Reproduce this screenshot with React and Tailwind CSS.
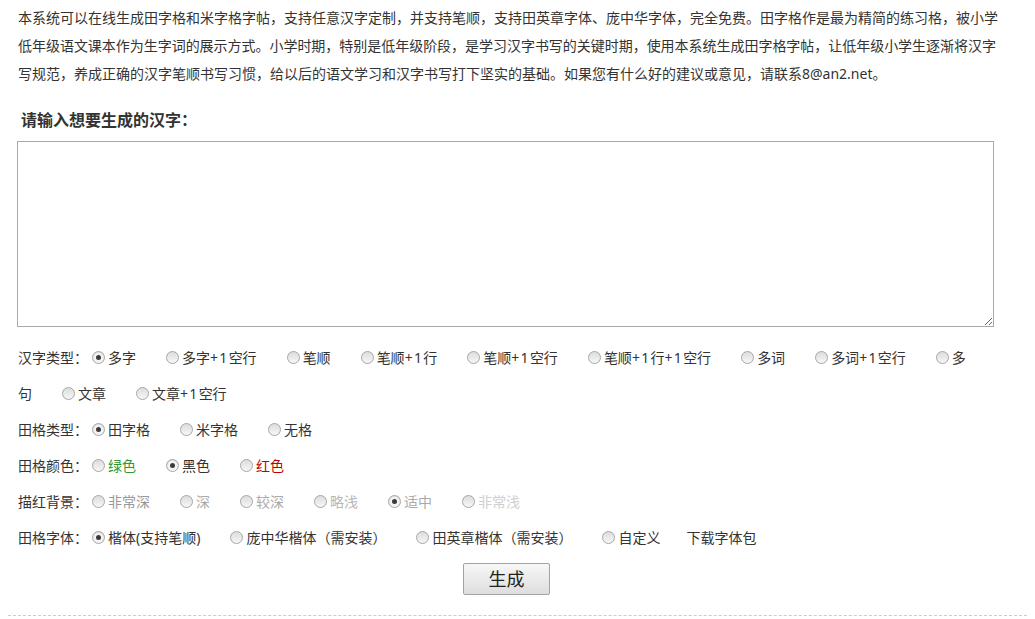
import React from "react";

const FONT = "font-['Noto_Sans','Noto_Sans_CJK_SC',sans-serif]";

function Radio({ checked }) {
  return (
    <span className="ml-[4px] mr-[3px] inline-flex h-[13px] w-[13px] shrink-0 items-center justify-center rounded-full border border-[#a6a6a6] bg-gradient-to-b from-[#dcdcdc] to-[#f7f7f7]">
      {checked && (
        <span className="flex h-[9px] w-[9px] items-center justify-center rounded-full bg-[#f4f4f4]">
          <span className="h-[5px] w-[5px] rounded-full bg-[#3a3a3a]" />
        </span>
      )}
    </span>
  );
}

// "+1" runs are a touch wider in the original font
function Label({ text }) {
  const parts = text.split(/(\+1)/);
  return parts.map((p, i) =>
    p === "+1" ? (
      <span key={i} className="tracking-[1.3px]">
        {p}
      </span>
    ) : (
      <React.Fragment key={i}>{p}</React.Fragment>
    )
  );
}

function Item({ label, checked, color = "text-[#333]", noRadio }) {
  return (
    <span className="mr-[26px] inline-flex items-center">
      {!noRadio && <Radio checked={checked} />}
      <span className={color}>
        <Label text={label} />
      </span>
    </span>
  );
}

function Row({ label, children }) {
  return (
    <div className="flex h-[36px] items-center whitespace-nowrap">
      {label && <span>{label}</span>}
      {children}
    </div>
  );
}

export default function App() {
  return (
    <div className={`${FONT} bg-white text-[#333] min-h-[619px]`}>
      <div className="ml-[18px] w-[977px] pt-[4px]">
        <p className="whitespace-nowrap text-[14px] leading-[28px]">
          本系统可以在线生成田字格和米字格字帖，支持任意汉字定制，并支持笔顺，支持田英章字体、庞中华字体，完全免费。田字格作是最为精简的练习格，被小学
          <br />
          <span className="tracking-[-0.03px]">
            低年级语文课本作为生字词的展示方式。小学时期，特别是低年级阶段，是学习汉字书写的关键时期，使用本系统生成田字格字帖，让低年级小学生逐渐将汉字
          </span>
          <br />
          写规范，养成正确的汉字笔顺书写习惯，给以后的语文学习和汉字书写打下坚实的基础。如果您有什么好的建议或意见，请联系8@an2.net。
        </p>

        <h2 className="mt-[18px] ml-[3px] text-[16px] font-bold leading-[28px] text-[#333]">
          请输入想要生成的汉字：
        </h2>

        <textarea className="-ml-px mt-[7px] block h-[186px] w-[977px] border border-[#a9a9a9] bg-white outline-none" />

        <div className="mt-[12px] text-[14px]">
          <Row label="汉字类型：">
            <Item label="多字" checked />
            <Item label="多字+1空行" />
            <Item label="笔顺" />
            <Item label="笔顺+1行" />
            <Item label="笔顺+1空行" />
            <Item label="笔顺+1行+1空行" />
            <Item label="多词" />
            <Item label="多词+1空行" />
            <span className="inline-flex items-center">
              <Radio />
              <span>多</span>
            </span>
          </Row>
          <Row>
            <Item label="句" noRadio />
            <Item label="文章" />
            <Item label="文章+1空行" />
          </Row>
          <Row label="田格类型：">
            <Item label="田字格" checked />
            <Item label="米字格" />
            <Item label="无格" />
          </Row>
          <Row label="田格颜色：">
            <Item label="绿色" color="text-[#2f9a2f]" />
            <Item label="黑色" checked />
            <Item label="红色" color="text-[#c00000]" />
          </Row>
          <Row label="描红背景：">
            <Item label="非常深" color="text-[#999]" />
            <Item label="深" color="text-[#aaa]" />
            <Item label="较深" color="text-[#aaa]" />
            <Item label="略浅" color="text-[#b8b8b8]" />
            <Item label="适中" checked color="text-[#aaa]" />
            <Item label="非常浅" color="text-[#cfcfcf]" />
          </Row>
          <Row label="田格字体：">
            <Item label="楷体(支持笔顺)" checked />
            <Item label="庞中华楷体（需安装）" />
            <Item label="田英章楷体（需安装）" />
            <Item label="自定义" />
            <span className="text-[#333]">下载字体包</span>
          </Row>
        </div>

        <div className="mt-[8px] flex justify-center">
          <button className="h-[32px] w-[87px] rounded-[2px] border border-[#a3a3a3] bg-gradient-to-b from-[#f7f7f7] to-[#dedede] text-[18px] leading-none text-[#222]">
            生成
          </button>
        </div>
      </div>

      <div className="mx-[8px] mt-[20px] border-t border-dashed border-[#cccccc]" />
    </div>
  );
}
